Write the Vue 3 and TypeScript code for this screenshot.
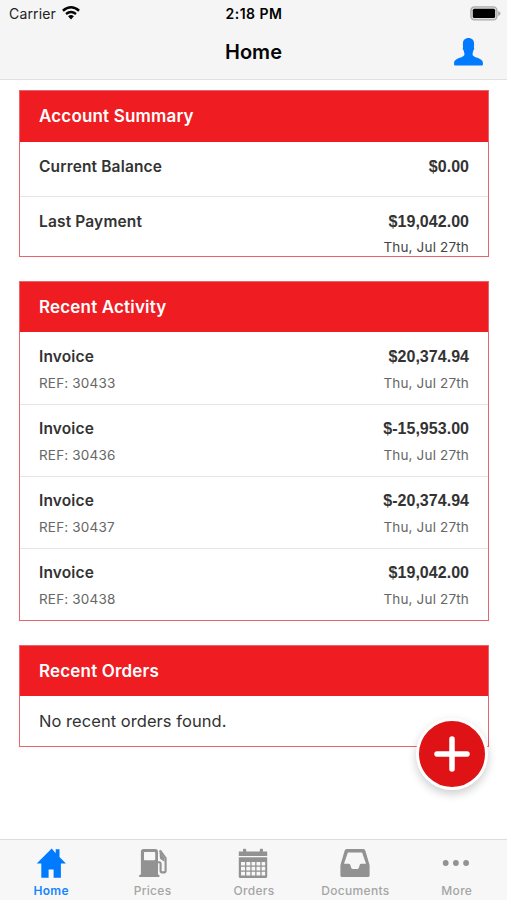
<script setup lang="ts">
interface Entry {
  title: string
  reference?: string
  amount: string
  date?: string
}

const summary: Entry[] = [
  { title: 'Current Balance', amount: '$0.00' },
  { title: 'Last Payment', amount: '$19,042.00', date: 'Thu, Jul 27th' },
]

const activity: Entry[] = [
  { title: 'Invoice', reference: 'REF: 30433', amount: '$20,374.94', date: 'Thu, Jul 27th' },
  { title: 'Invoice', reference: 'REF: 30436', amount: '$-15,953.00', date: 'Thu, Jul 27th' },
  { title: 'Invoice', reference: 'REF: 30437', amount: '$-20,374.94', date: 'Thu, Jul 27th' },
  { title: 'Invoice', reference: 'REF: 30438', amount: '$19,042.00', date: 'Thu, Jul 27th' },
]
</script>

<template>
  <div class="screen">
    <header class="top">
      <div class="status">
        <div class="carrier">
          <span>Carrier</span>
          <svg width="18" height="14" viewBox="0 0 18 14" fill="none" stroke="#050505">
            <path d="M.9 4.7Q9-2.1 17.1 4.7" stroke-width="2.5" />
            <path d="M4 8Q9 3.9 14 8" stroke-width="2.3" />
            <path d="M6.1 10.2Q9 7.9 11.9 10.2L9 13.4Z" fill="#050505" stroke="none" />
          </svg>
        </div>
        <time>2:18 PM</time>
        <svg class="battery" width="31" height="15" viewBox="0 0 31 15">
          <rect x=".9" y=".9" width="26" height="13" rx="3.5" fill="#ddd" stroke="#aaa" stroke-width="1.4" />
          <rect x="2.8" y="2.8" width="22.3" height="9.3" rx="1.5" fill="#000" />
          <path d="M28.2 5q2.3.8 2.3 2.5t-2.3 2.5z" fill="#aaa" />
        </svg>
      </div>
      <div class="nav">
        <h1>Home</h1>
        <button class="profile" aria-label="Profile">
          <svg width="29" height="28" viewBox="0 0 29 28" fill="#007aff">
            <path d="M14.5 0C18 0 20.1 2.2 20.1 5.7c0 1.800-.1 2.700-.2 3.600.6.700.3 2.400-.5 3-.3 1.400-.5 2.300-.8 3v1.600c.6 1.200 2.200 1.900 4.600 2.900 4.300 1.700 5.700 2.900 5.700 5.200v1.600q0 .9-.9.900H1q-.9 0-.9-.9V25c0-2.300 1.400-3.500 5.700-5.200 2.400-1 4-1.700 4.600-2.900v-1.600c-.3-.7-.5-1.600-.8-3-.8-.6-1.100-2.300-.5-3-.1-.9-.2-1.800-.2-3.600C8.900 2.200 11 0 14.500 0z" />
          </svg>
        </button>
      </div>
    </header>

    <main>
      <section class="card account">
        <h2>Account Summary</h2>
        <div v-for="entry in summary" :key="entry.title" class="row">
          <div class="line">
            <strong>{{ entry.title }}</strong>
            <strong class="amount">{{ entry.amount }}</strong>
          </div>
          <div v-if="entry.date" class="line detail">
            <span></span><span class="date">{{ entry.date }}</span>
          </div>
        </div>
      </section>

      <section class="card activity">
        <h2>Recent Activity</h2>
        <div v-for="entry in activity" :key="entry.reference" class="row">
          <div class="line">
            <strong>{{ entry.title }}</strong>
            <strong class="amount">{{ entry.amount }}</strong>
          </div>
          <div class="line detail">
            <span>{{ entry.reference }}</span><span class="date">{{ entry.date }}</span>
          </div>
        </div>
      </section>

      <section class="card orders">
        <h2>Recent Orders</h2>
        <p>No recent orders found.</p>
      </section>
    </main>

    <button class="add" aria-label="Add">
      <svg width="36" height="36" viewBox="0 0 36 36" stroke="#fff" stroke-width="5.5" stroke-linecap="round">
        <path d="M18 3v30M3 18h30" />
      </svg>
    </button>

    <nav class="tabs">
      <a class="tab active">
        <svg width="32" height="30" viewBox="0 0 32 30" fill="currentColor">
          <path d="M16.7.4 1.7 15.4h4.6V29.7h7.3v-8.2h5v8.2h7.3V15.4h5l-6.4-6.4V1.2h-3.8v4z" />
        </svg>
        <span>Home</span>
      </a>
      <a class="tab">
        <svg width="32" height="30" viewBox="0 0 32 30" fill="currentColor">
          <path fill-rule="evenodd" d="M7.5 1h11.8q2.700 0 2.700 2.700v22.800l1.400.6v1.900H3.200v-1.900l1.700-.6V3.700Q4.900 1 7.500 1zm1.200 3q-.7 0-.7.800v6.700q0 .8.700.8h9.700q.8 0 .8-.8V4.800q0-.8-.8-.8z" />
          <path fill="none" stroke="currentColor" stroke-width="2.1" d="M22 14.300h1.100q1.500 0 1.500 1.500v7.100q0 1.500 2.500 1.500t2.500-1.500V10L24 2.400" />
          <path d="M23.300 2 28.500 10.300v3.500L24 10.800z" />
        </svg>
        <span>Prices</span>
      </a>
      <a class="tab">
        <svg width="32" height="30" viewBox="0 0 32 30" fill="currentColor">
          <path d="M1.8 3.4H6V1.7q0-.9.9-.9h1.4q.9 0 .9.9v1.7h13.600V1.7q0-.9.9-.9h1.400q.9 0 .9.9v1.700h4.200V8h-28.400z" />
          <path fill-rule="evenodd" d="M1.8 9.200h28.400v19.600q0 1.100-1.100 1.100H2.900q-1.100 0-1.100-1.100zM4 14v3.600h4V14zm5.300 0v3.600h4V14zm5.300 0v3.600h3.600V14zm4.900 0v3.600h3.800V14zm5.100 0v3.600h3.600V14zM4 18.800v3.700h4v-3.700zm5.300 0v3.700h4v-3.700zm5.300 0v3.700h3.600v-3.700zm4.900 0v3.700h3.800v-3.700zm5.100 0v3.700h3.600v-3.700zM4 23.700v3.700h4v-3.700zm5.300 0v3.700h4v-3.700zm5.300 0v3.700h3.600v-3.700zm4.900 0v3.700h3.800v-3.700zm5.100 0v3.700h3.600v-3.700z" />
        </svg>
        <span>Orders</span>
      </a>
      <a class="tab">
        <svg width="32" height="30" viewBox="0 0 32 30" fill="currentColor">
          <path fill-rule="evenodd" d="M7.7 1h16.600q1.700 0 2.100 1.700l4.200 14.500v10.300q0 1.600-1.700 1.600H3.100q-1.700 0-1.700-1.600V17.200L5.600 2.700Q6 1 7.700 1zM8.900 4.600 5 15.800h4.600q1.300 0 1.700 1.200l1 3.100q.3 1 1.300 1h4.800q1 0 1.300-1l1-3.100q.4-1.200 1.700-1.200H27L23.100 4.600z" />
        </svg>
        <span>Documents</span>
      </a>
      <a class="tab">
        <svg width="32" height="30" viewBox="0 0 32 30" fill="currentColor">
          <circle cx="5.7" cy="15" r="2.9" /><circle cx="15.9" cy="15" r="2.9" /><circle cx="26.1" cy="15" r="2.9" />
        </svg>
        <span>More</span>
      </a>
    </nav>
  </div>
</template>

<style>
body {
  margin: 0;
}
</style>

<style scoped>
.screen {
  width: 507px;
  height: 900px;
  display: flex;
  flex-direction: column;
  position: relative;
  overflow: hidden;
  background: #fff;
  color: #333;
  font-family: Inter, "Liberation Sans", sans-serif;
  white-space: nowrap;
}
button {
  padding: 0;
  border: 0;
  background: none;
}
svg {
  display: block;
}
h1, h2, p {
  margin: 0;
}
.top {
  box-sizing: border-box;
  height: 80px;
  flex: none;
  background: #f5f5f5;
  border-bottom: 1px solid #e0e0e0;
}
.status {
  height: 27px;
  padding: 0 6px 0 9px;
  display: grid;
  grid-template-columns: 1fr auto 1fr;
  align-items: center;
  color: #000;
  font-size: 14px;
}
.carrier {
  display: flex;
  align-items: center;
  gap: 6px;
  color: #222;
}
.carrier span {
  letter-spacing: 0.15px;
}
.carrier svg {
  margin-top: -1px;
}
time {
  font-weight: 600;
  letter-spacing: 0.5px;
  margin-right: 2px;
}
.battery {
  justify-self: end;
  margin-top: -1px;
}
.nav {
  height: 50px;
  padding: 0 24px;
  display: grid;
  grid-template-columns: 1fr auto 1fr;
  align-items: center;
}
h1 {
  grid-column: 2;
  color: #050505;
  font-size: 20px;
  line-height: 26px;
  font-weight: 600;
}
.profile {
  justify-self: end;
}
main {
  flex: 1;
  padding: 10px 18px 0 19px;
  display: flex;
  flex-direction: column;
  gap: 25px;
}
.card {
  box-sizing: border-box;
  border: 1px solid #e8646c;
  overflow: hidden;
  background: #fff;
}
.account {
  height: 167px;
  margin-bottom: -1px;
}
.activity {
  height: 340px;
  margin-bottom: -1px;
}
.orders {
  height: 102px;
}
h2 {
  height: 50px;
  padding-left: 19px;
  background: #ef1c22;
  color: #fff;
  font-size: 17px;
  line-height: 50px;
  font-weight: 600;
  letter-spacing: 0.17px;
}
.account h2 {
  height: 51px;
}
.row {
  box-sizing: border-box;
  height: 72px;
  padding: 13px 19px 0;
}
.row + .row {
  border-top: 1px solid #e6e6e6;
}
.activity .row + .row {
  padding-top: 12px;
}
.account .row:nth-child(2) {
  height: 54px;
}
.line {
  display: flex;
  justify-content: space-between;
  align-items: center;
  height: 23px;
  font-size: 15.5px;
}
.line strong {
  font-weight: 600;
  letter-spacing: 0.15px;
}
.line .amount {
  font-family: "Liberation Sans", sans-serif;
  font-weight: 700;
  font-size: 16px;
  letter-spacing: 0.03px;
}
.detail {
  height: 30px;
  color: #666;
  font-size: 13.5px;
  letter-spacing: 0.17px;
}
.account .detail {
  height: 28px;
  color: #444;
}
.orders p {
  padding-left: 19px;
  font-size: 16.5px;
  line-height: 51px;
  letter-spacing: 0.05px;
}
.add {
  position: absolute;
  left: 416px;
  top: 718px;
  width: 72px;
  height: 72px;
  display: grid;
  place-items: center;
  border: 3px solid #fff;
  border-radius: 50%;
  background: #df1216;
  box-shadow: 0 4px 10px #0003;
}
.tabs {
  box-sizing: border-box;
  height: 61px;
  flex: none;
  display: grid;
  grid-template-columns: repeat(5, 1fr);
  background: #f7f7f7;
  border-top: 1px solid #dcdcdc;
}
.tab {
  display: flex;
  flex-direction: column;
  align-items: center;
  padding-top: 8px;
  color: #929292;
}
.tab span {
  margin: 5px 0 0 1px;
  color: #a5a5a5;
  font-size: 12px;
  line-height: 16px;
  font-weight: 500;
  letter-spacing: 0.3px;
}
.tab.active {
  color: #007aff;
}
.active span {
  color: #1685ff;
  font-weight: 600;
}
</style>
